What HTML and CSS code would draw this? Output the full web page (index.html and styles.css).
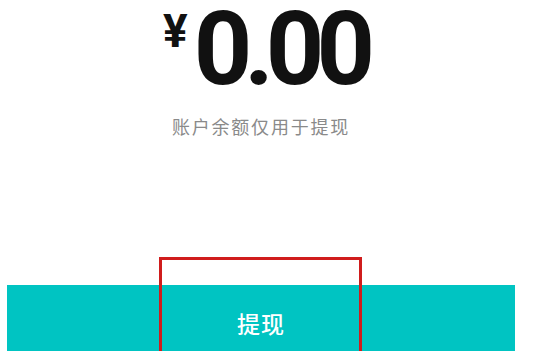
FILE: index.html
```html
<!DOCTYPE html>
<html lang="zh-CN">
<head>
    <meta charset="UTF-8">
    <meta name="viewport" content="width=device-width, initial-scale=1.0">
    <title>账户余额</title>
    <link rel="stylesheet" href="styles.css">
</head>
<body>
    <div class="wallet">
        <div class="balance">
            <span class="currency">¥</span>
            <span class="amount">0.00</span>
        </div>
        <p class="balance-note">账户余额仅用于提现</p>

        <div class="action">
            <button class="withdraw-btn">提现</button>
            <!-- highlight box over the button -->
            <div class="highlight"></div>
        </div>
    </div>
</body>
</html>
```

FILE: styles.css
```css
* {
    margin: 0;
    padding: 0;
    box-sizing: border-box;
}

body {
    font-family: Roboto, "Noto Sans CJK SC", sans-serif;
    background: #fff;
    color: #111;
}

.wallet {
    width: 522px;
    height: 351px;
    overflow: hidden;
    display: flex;
    flex-direction: column;
    align-items: center;
}

/* Balance */
.balance {
    display: flex;
    align-items: flex-start;
}

.currency {
    font-size: 46px;
    font-weight: 700;
    line-height: 1;
    margin-top: 8px;
    margin-right: 6px;
}

.amount {
    font-size: 102px;
    font-weight: 700;
    line-height: 98px;
    letter-spacing: -8px;
    padding-right: 8px;
    margin-right: -16px;
}

.balance-note {
    margin-top: 15px;
    font-family: "Noto Sans CJK SC", sans-serif;
    font-size: 18px;
    line-height: 26px;
    letter-spacing: 1.8px;
    color: #8a8a8a;
}

/* Withdraw button */
.action {
    position: relative;
    width: 100%;
    padding: 0 7px;
    margin-top: 146px;
}

.withdraw-btn {
    display: block;
    width: 100%;
    height: 76px;
    border: none;
    background: #00c4c2;
    color: #fff;
    font-family: "Noto Sans CJK SC", sans-serif;
    font-size: 23px;
    font-weight: 500;
    letter-spacing: 1px;
}

.highlight {
    position: absolute;
    top: -28px;
    left: 159px;
    width: 203px;
    height: 130px;
    border: 3px solid #d01c1c;
    pointer-events: none;
}
```
